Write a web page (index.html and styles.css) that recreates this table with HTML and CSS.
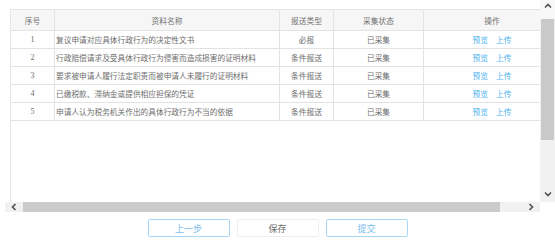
FILE: index.html
```html
<!DOCTYPE html>
<html lang="zh-CN">
<head>
<meta charset="utf-8">
<title>资料列表</title>
<link rel="stylesheet" href="styles.css">
</head>
<body>
<div class="page">
  <div class="viewport">
    <div class="content">
      <div class="grid-wrap">
        <div class="grid">
          <div class="row head">
            <div class="cell c">序号</div>
            <div class="cell c">资料名称</div>
            <div class="cell c">报送类型</div>
            <div class="cell c">采集状态</div>
            <div class="cell c">操作</div>
          </div>
          <div class="row">
            <div class="cell c num">1</div>
            <div class="cell l">复议申请对应具体行政行为的决定性文书</div>
            <div class="cell c">必报</div>
            <div class="cell c">已采集</div>
            <div class="cell c ops"><a class="link">预览</a><a class="link">上传</a></div>
          </div>
          <div class="row">
            <div class="cell c num">2</div>
            <div class="cell l">行政赔偿请求及受具体行政行为侵害而造成损害的证明材料</div>
            <div class="cell c">条件报送</div>
            <div class="cell c">已采集</div>
            <div class="cell c ops"><a class="link">预览</a><a class="link">上传</a></div>
          </div>
          <div class="row">
            <div class="cell c num">3</div>
            <div class="cell l">要求被申请人履行法定职责而被申请人未履行的证明材料</div>
            <div class="cell c">条件报送</div>
            <div class="cell c">已采集</div>
            <div class="cell c ops"><a class="link">预览</a><a class="link">上传</a></div>
          </div>
          <div class="row">
            <div class="cell c num">4</div>
            <div class="cell l">已缴税款、滞纳金或提供相应担保的凭证</div>
            <div class="cell c">条件报送</div>
            <div class="cell c">已采集</div>
            <div class="cell c ops"><a class="link">预览</a><a class="link">上传</a></div>
          </div>
          <div class="row">
            <div class="cell c num">5</div>
            <div class="cell l">申请人认为税务机关作出的具体行政行为不当的依据</div>
            <div class="cell c">条件报送</div>
            <div class="cell c">已采集</div>
            <div class="cell c ops"><a class="link">预览</a><a class="link">上传</a></div>
          </div>
        </div>
      </div>
    </div>
    <div class="vbar">
      <div class="vbtn"><svg width="8" height="6" viewBox="0 0 8 6"><path d="M1 4.5 L4 1.5 L7 4.5" fill="none" stroke="#505050" stroke-width="1.6"/></svg></div>
      <div class="vthumb"></div>
      <div class="vtrack"></div>
      <div class="vbtn"><svg width="8" height="6" viewBox="0 0 8 6"><path d="M1 1.5 L4 4.5 L7 1.5" fill="none" stroke="#505050" stroke-width="1.6"/></svg></div>
    </div>
  </div>
  <div class="hbar">
    <div class="hbtn"><svg width="6" height="8" viewBox="0 0 6 8"><path d="M4.5 1 L1.5 4 L4.5 7" fill="none" stroke="#505050" stroke-width="1.6"/></svg></div>
    <div class="hthumb"></div>
    <div class="htrack"></div>
    <div class="hbtn"><svg width="6" height="8" viewBox="0 0 6 8"><path d="M1.5 1 L4.5 4 L1.5 7" fill="none" stroke="#505050" stroke-width="1.6"/></svg></div>
  </div>
  <div class="actions">
    <button class="btn primary">上一步</button>
    <button class="btn plain">保存</button>
    <button class="btn primary">提交</button>
  </div>
</div>
</body>
</html>
```

FILE: styles.css
```css
html, body {
  margin: 0;
  padding: 0;
  background: #ffffff;
}

body {
  font-family: "Noto Sans CJK SC", "Noto Sans", sans-serif;
  color: #6e6e6e;
}

.page {
  width: 555px;
  height: 242px;
  overflow: hidden;
}

.viewport {
  display: flex;
  height: 202px;
}

.content {
  flex: 1;
  overflow: hidden;
  padding: 9px 0 0 10px;
}

.grid-wrap {
  height: 100%;
  border-left: 1px solid #e6e6e6;
  box-sizing: border-box;
}

.grid {
  width: 560px;
  border-top: 1px solid #e3e3e3;
}

.row {
  display: grid;
  grid-template-columns: 44px 225px 54px 90px 136px;
  height: 18px;
  border-bottom: 1px solid #e3e3e3;
  box-sizing: border-box;
}

.row.head {
  height: 21px;
  background: #f6f6f6;
  color: #727272;
}

.cell {
  display: flex;
  align-items: center;
  border-right: 1px solid #e3e3e3;
  font-size: 7.7px;
  white-space: nowrap;
  overflow: hidden;
}

.cell:last-child {
  border-right: none;
}

.cell.c {
  justify-content: center;
}

.cell.l {
  justify-content: flex-start;
  padding-left: 1px;
}

.cell.num {
  font-family: "Liberation Serif", serif;
  font-size: 8px;
}

.ops {
  gap: 8px;
}

.link {
  color: #4db3ef;
  cursor: pointer;
}

.vbar {
  width: 15px;
  display: flex;
  flex-direction: column;
  background: #f1f1f1;
}

.vbtn {
  height: 17px;
  display: flex;
  align-items: center;
  justify-content: center;
  flex: none;
}

.vbar .vbtn:first-child {
  background: #f8f8f8;
  height: 19px;
  align-items: flex-start;
  padding-top: 3px;
  box-sizing: border-box;
}

.vthumb {
  height: 121px;
  margin: 0 1px;
  background: #c9c9c9;
  flex: none;
}

.vtrack {
  flex: 1;
}

.hbar {
  margin-left: 5px;
  width: 535px;
  height: 10px;
  display: flex;
  background: #f1f1f1;
}

.hbtn {
  width: 18px;
  display: flex;
  align-items: center;
  justify-content: center;
  flex: none;
}

.hthumb {
  width: 477px;
  background: #cbcbcb;
  flex: none;
}

.htrack {
  flex: 1;
}

.actions {
  display: flex;
  justify-content: center;
  gap: 7px;
  margin-top: 7px;
}

.btn {
  width: 82px;
  height: 18px;
  padding: 0;
  background: #ffffff;
  border-radius: 2px;
  font-family: "Noto Sans CJK SC", "Noto Sans", sans-serif;
  font-size: 9px;
  line-height: 1;
  cursor: pointer;
}

.btn.primary {
  border: 1px solid #a9d6f5;
  color: #7dbcec;
}

.btn.plain {
  border: 1px solid #efefef;
  color: #6a6a6a;
}
```
